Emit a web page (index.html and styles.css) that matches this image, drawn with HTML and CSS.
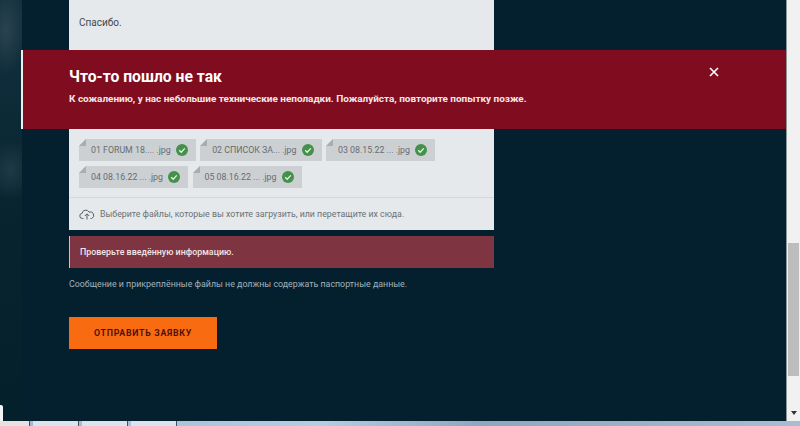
FILE: index.html
```html
<!DOCTYPE html>
<html lang="ru">
<head>
    <meta charset="UTF-8">
    <title>Заявка</title>
    <link rel="stylesheet" href="styles.css">
</head>
<body>
<div class="window">
    <div class="backdrop"><span class="backdrop-tab"></span></div>

    <main class="content">
        <div class="column">
            <section class="panel">
                <p class="message">Спасибо.</p>
                <div class="files">
                    <div class="file"><span>01 FORUM 18.... .jpg</span><svg class="check" viewBox="0 0 12 12"><circle cx="6" cy="6" r="6"/><path d="M3.2 6.2l2 2 3.6-3.8"/></svg></div>
                    <div class="file"><span>02 СПИСОК ЗА... .jpg</span><svg class="check" viewBox="0 0 12 12"><circle cx="6" cy="6" r="6"/><path d="M3.2 6.2l2 2 3.6-3.8"/></svg></div>
                    <div class="file"><span>03 08.15.22 ... .jpg</span><svg class="check" viewBox="0 0 12 12"><circle cx="6" cy="6" r="6"/><path d="M3.2 6.2l2 2 3.6-3.8"/></svg></div>
                    <div class="file"><span>04 08.16.22 ... .jpg</span><svg class="check" viewBox="0 0 12 12"><circle cx="6" cy="6" r="6"/><path d="M3.2 6.2l2 2 3.6-3.8"/></svg></div>
                    <div class="file"><span>05 08.16.22 ... .jpg</span><svg class="check" viewBox="0 0 12 12"><circle cx="6" cy="6" r="6"/><path d="M3.2 6.2l2 2 3.6-3.8"/></svg></div>
                </div>
                <div class="upload">
                    <svg class="cloud" viewBox="0 0 16 12"><path d="M4.5 10.5H3.6A2.6 2.6 0 0 1 3.2 5.3 3.6 3.6 0 0 1 10 4.1 3.2 3.2 0 0 1 12.6 10.5H11.5"/><path d="M8 11.5V6M5.8 8L8 5.8 10.2 8"/></svg>
                    <span>Выберите файлы, которые вы хотите загрузить, или перетащите их сюда.</span>
                </div>
            </section>
            <div class="form-error">Проверьте введённую информацию.</div>
            <p class="note">Сообщение и прикреплённые файлы не должны содержать паспортные данные.</p>
            <button class="submit">Отправить заявку</button>
        </div>
    </main>

    <div class="scrollbar">
        <div class="thumb"></div>
        <div class="arrow"></div>
    </div>

    <aside class="alert">
        <div>
            <h2>Что-то пошло не так</h2>
            <p>К сожалению, у нас небольшие технические неполадки. Пожалуйста, повторите попытку позже.</p>
        </div>
        <svg class="close" viewBox="0 0 10 10"><path d="M1 1l8 8M9 1l-8 8"/></svg>
    </aside>
</div>

<div class="taskbar">
    <span class="task task-first"></span>
    <span class="task"></span>
    <span class="task"></span>
    <span class="task"></span>
</div>
</body>
</html>
```

FILE: styles.css
```css
* {
    box-sizing: border-box;
}
html, body {
    margin: 0;
    height: 100%;
    overflow: hidden;
}
body {
    display: flex;
    flex-direction: column;
    font-family: Roboto, "Liberation Sans", sans-serif;
    background: #04202f;
}
.window {
    position: relative;
    flex: 1;
    display: flex;
    min-height: 0;
}
.backdrop {
    position: relative;
    width: 22px;
    background:
        radial-gradient(ellipse 20px 45px at 6px 30px, #2b434e 0%, rgba(43, 67, 78, 0) 100%),
        radial-gradient(ellipse 24px 30px at 10px 170px, #1f3a46 0%, rgba(31, 58, 70, 0) 100%),
        linear-gradient(#123040, #08252f 50%, #04202b);
}
.backdrop-tab {
    position: absolute;
    left: 0;
    bottom: 0;
    width: 3px;
    height: 16px;
    background: #f4f4f4;
    border-top-right-radius: 2px;
}
.content {
    flex: 1;
    padding-left: 47px;
    background: #04202f;
}
.column {
    width: 425px;
}
.panel {
    height: 230px;
    display: flex;
    flex-direction: column;
    background: #e5e9eb;
}
.message {
    margin: 0;
    height: 139px;
    padding: 16px 0 0 10px;
    font-size: 10px;
    line-height: 14px;
    color: #3f4a50;
}
.files {
    display: flex;
    flex-wrap: wrap;
    gap: 5px 4.5px;
    height: 59px;
    padding-left: 10px;
    border-bottom: 1px solid #d3d8da;
    align-content: flex-start;
}
.file {
    position: relative;
    display: flex;
    align-items: center;
    gap: 5px;
    height: 22px;
    padding: 0 8px 0 12px;
    background: #cdd0d2;
    font-size: 8.8px;
    color: #666d71;
    white-space: nowrap;
}
.file::before {
    content: "";
    position: absolute;
    left: 0;
    top: 0;
    border-style: solid;
    border-width: 7px 7px 0 0;
    border-color: #e5e9eb transparent transparent transparent;
}
.file::after {
    content: "";
    position: absolute;
    left: 0;
    top: 0;
    border-style: solid;
    border-width: 0 0 7px 7px;
    border-color: transparent transparent #a9adaf transparent;
}
.check {
    flex: none;
    width: 12px;
    height: 12px;
}
.check circle {
    fill: #43914a;
}
.check path {
    fill: none;
    stroke: #e8f2e8;
    stroke-width: 1.3;
}
.upload {
    flex: 1;
    display: flex;
    align-items: center;
    gap: 5px;
    padding: 0 0 0 10px;
    font-size: 8.8px;
    color: #6a7276;
}
.cloud {
    width: 16px;
    height: 12px;
    fill: none;
    stroke: #596166;
    stroke-width: 1;
}
.form-error {
    height: 32px;
    margin-top: 6px;
    padding-left: 10px;
    border-left: 1px solid #c9c3c6;
    background: #7f3441;
    color: #f1e4e6;
    font-size: 8.9px;
    font-weight: 500;
    line-height: 32px;
}
.note {
    margin: 10px 0 0;
    font-size: 8.85px;
    line-height: 12px;
    color: #a3b2b9;
}
.submit {
    display: block;
    width: 148px;
    height: 32px;
    margin-top: 27px;
    padding: 0;
    border: 0;
    background: #f96b10;
    color: #501208;
    font: 700 8.8px Roboto, "Liberation Sans", sans-serif;
    letter-spacing: 0.7px;
    text-transform: uppercase;
}
.scrollbar {
    position: relative;
    width: 14px;
    border-left: 1px solid #8d9597;
    background: #f1f1f1;
}
.thumb {
    position: absolute;
    left: 1px;
    right: 1px;
    top: 243px;
    height: 133px;
    background: #bdbdbd;
}
.arrow {
    position: absolute;
    left: 4px;
    bottom: 6px;
    border-style: solid;
    border-width: 4px 3px 0;
    border-color: #333 transparent transparent;
}
.alert {
    position: absolute;
    left: 21px;
    right: 14px;
    top: 50px;
    height: 79px;
    display: flex;
    justify-content: space-between;
    padding: 18px 67px 0 46px;
    border-left: 2px solid #eee;
    background: #7f0d1f;
    color: #fff;
}
.alert h2 {
    margin: 0;
    font-size: 15.7px;
    line-height: 18px;
    font-weight: 700;
}
.alert p {
    margin: 6px 0 0;
    font-size: 9.95px;
    line-height: 14px;
    font-weight: 700;
    color: #f6e6e8;
}
.close {
    width: 10px;
    height: 10px;
    margin-top: -1px;
    fill: none;
    stroke: #fff;
    stroke-width: 1.6;
}
.taskbar {
    display: flex;
    gap: 3px;
    height: 5px;
    flex: none;
    background: linear-gradient(90deg, #9db8d4, #b5cde3 40%, #8ea6bf 60%, #a8bdd2 100%);
}
.task {
    width: 46px;
    background: #dbe4ee;
    border-right: 1px solid #40505f;
}
.task-first {
    width: 30px;
    background: #e7e2e2;
}
```
